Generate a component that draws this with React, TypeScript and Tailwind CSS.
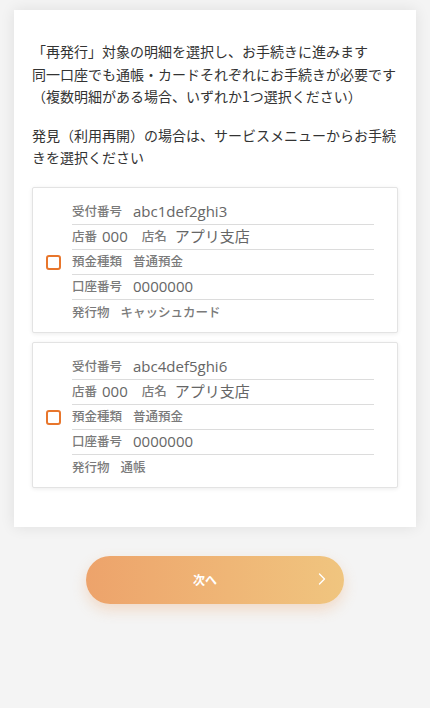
import { ChevronRight } from "lucide-react";

type Item = {
  receipt: string;
  branchNo: string;
  branchName: string;
  depositType: string;
  account: string;
  issued: string;
};

const items: Item[] = [
  {
    receipt: "abc1def2ghi3",
    branchNo: "000",
    branchName: "アプリ支店",
    depositType: "普通預金",
    account: "0000000",
    issued: "キャッシュカード",
  },
  {
    receipt: "abc4def5ghi6",
    branchNo: "000",
    branchName: "アプリ支店",
    depositType: "普通預金",
    account: "0000000",
    issued: "通帳",
  },
];

const jp = "font-['Noto_Sans_CJK_JP',sans-serif]";
const latin = "font-['Open_Sans','Noto_Sans_CJK_JP',sans-serif]";

function Row({ children, last }: { children: React.ReactNode; last?: boolean }) {
  return (
    <div
      className={`flex h-[25px] items-center gap-[11px] ${
        last ? "" : "border-b border-[#dcdcdc]"
      }`}
    >
      {children}
    </div>
  );
}

function Label({ children }: { children: React.ReactNode }) {
  return <span className="text-[12.5px] font-medium text-[#7a7a7a]">{children}</span>;
}

function Value({ children }: { children: React.ReactNode }) {
  return <span className={`${latin} text-[15px] text-[#666]`}>{children}</span>;
}

function ItemCard({ item }: { item: Item }) {
  return (
    <label className="flex items-center gap-[11px] rounded-[2px] border border-[#e3e3e3] bg-white pl-[13px] pr-[23px] pb-[7px] pt-[12px] shadow-[0_1px_4px_rgba(0,0,0,0.08)]">
      <span className="h-[15px] w-[15px] shrink-0 rounded-[3px] border-2 border-[#e8762c]" />
      <div className="flex flex-1 flex-col">
        <Row>
          <Label>受付番号</Label>
          <Value>{item.receipt}</Value>
        </Row>
        <Row>
          <span className="flex items-center gap-[5px]">
            <Label>店番</Label>
            <Value>{item.branchNo}</Value>
          </span>
          <span className="ml-[3px] flex items-center gap-[8px]">
            <Label>店名</Label>
            <Value>{item.branchName}</Value>
          </span>
        </Row>
        <Row>
          <Label>預金種類</Label>
          <Label>{item.depositType}</Label>
        </Row>
        <Row>
          <Label>口座番号</Label>
          <Value>{item.account}</Value>
        </Row>
        <Row last>
          <Label>発行物</Label>
          <Label>{item.issued}</Label>
        </Row>
      </div>
    </label>
  );
}

export default function App() {
  return (
    <div className={`${jp} flex h-[728px] w-[430px] flex-col bg-white`}>
      <div className="flex h-[708px] flex-col bg-[#f4f4f4] pt-[10px]">
        <div className="mx-[14px] bg-white px-[18px] pb-[39px] pt-[30px] shadow-[0_0_14px_rgba(0,0,0,0.09)]">
          <p className="text-[14px] leading-[22.5px] text-[#333]">
            「再発行」対象の明細を選択し、お手続きに進みます
            <br />
            同一口座でも通帳・カードそれぞれにお手続きが必要です
            <br />
            （複数明細がある場合、いずれか1つ選択ください）
          </p>
          <p className="mt-[16px] text-[14px] leading-[22.5px] text-[#333]">
            発見（利用再開）の場合は、サービスメニューからお手続きを選択ください
          </p>

          <div className="mt-[18px] flex flex-col gap-[9px]">
            {items.map((item) => (
              <ItemCard key={item.receipt} item={item} />
            ))}
          </div>
        </div>

        <div className="mt-[29px] flex justify-center">
          <button className="relative flex h-[48px] w-[258px] items-center justify-center rounded-full bg-gradient-to-r from-[#eda36b] to-[#f0c57f] shadow-[0_6px_14px_rgba(236,160,100,0.3)]">
            <span className="pr-[20px] text-[12px] font-bold text-white">次へ</span>
            <ChevronRight
              className="absolute right-[12px] top-[13px] text-white"
              size={20}
              strokeWidth={1.6}
            />
          </button>
        </div>
      </div>
    </div>
  );
}
